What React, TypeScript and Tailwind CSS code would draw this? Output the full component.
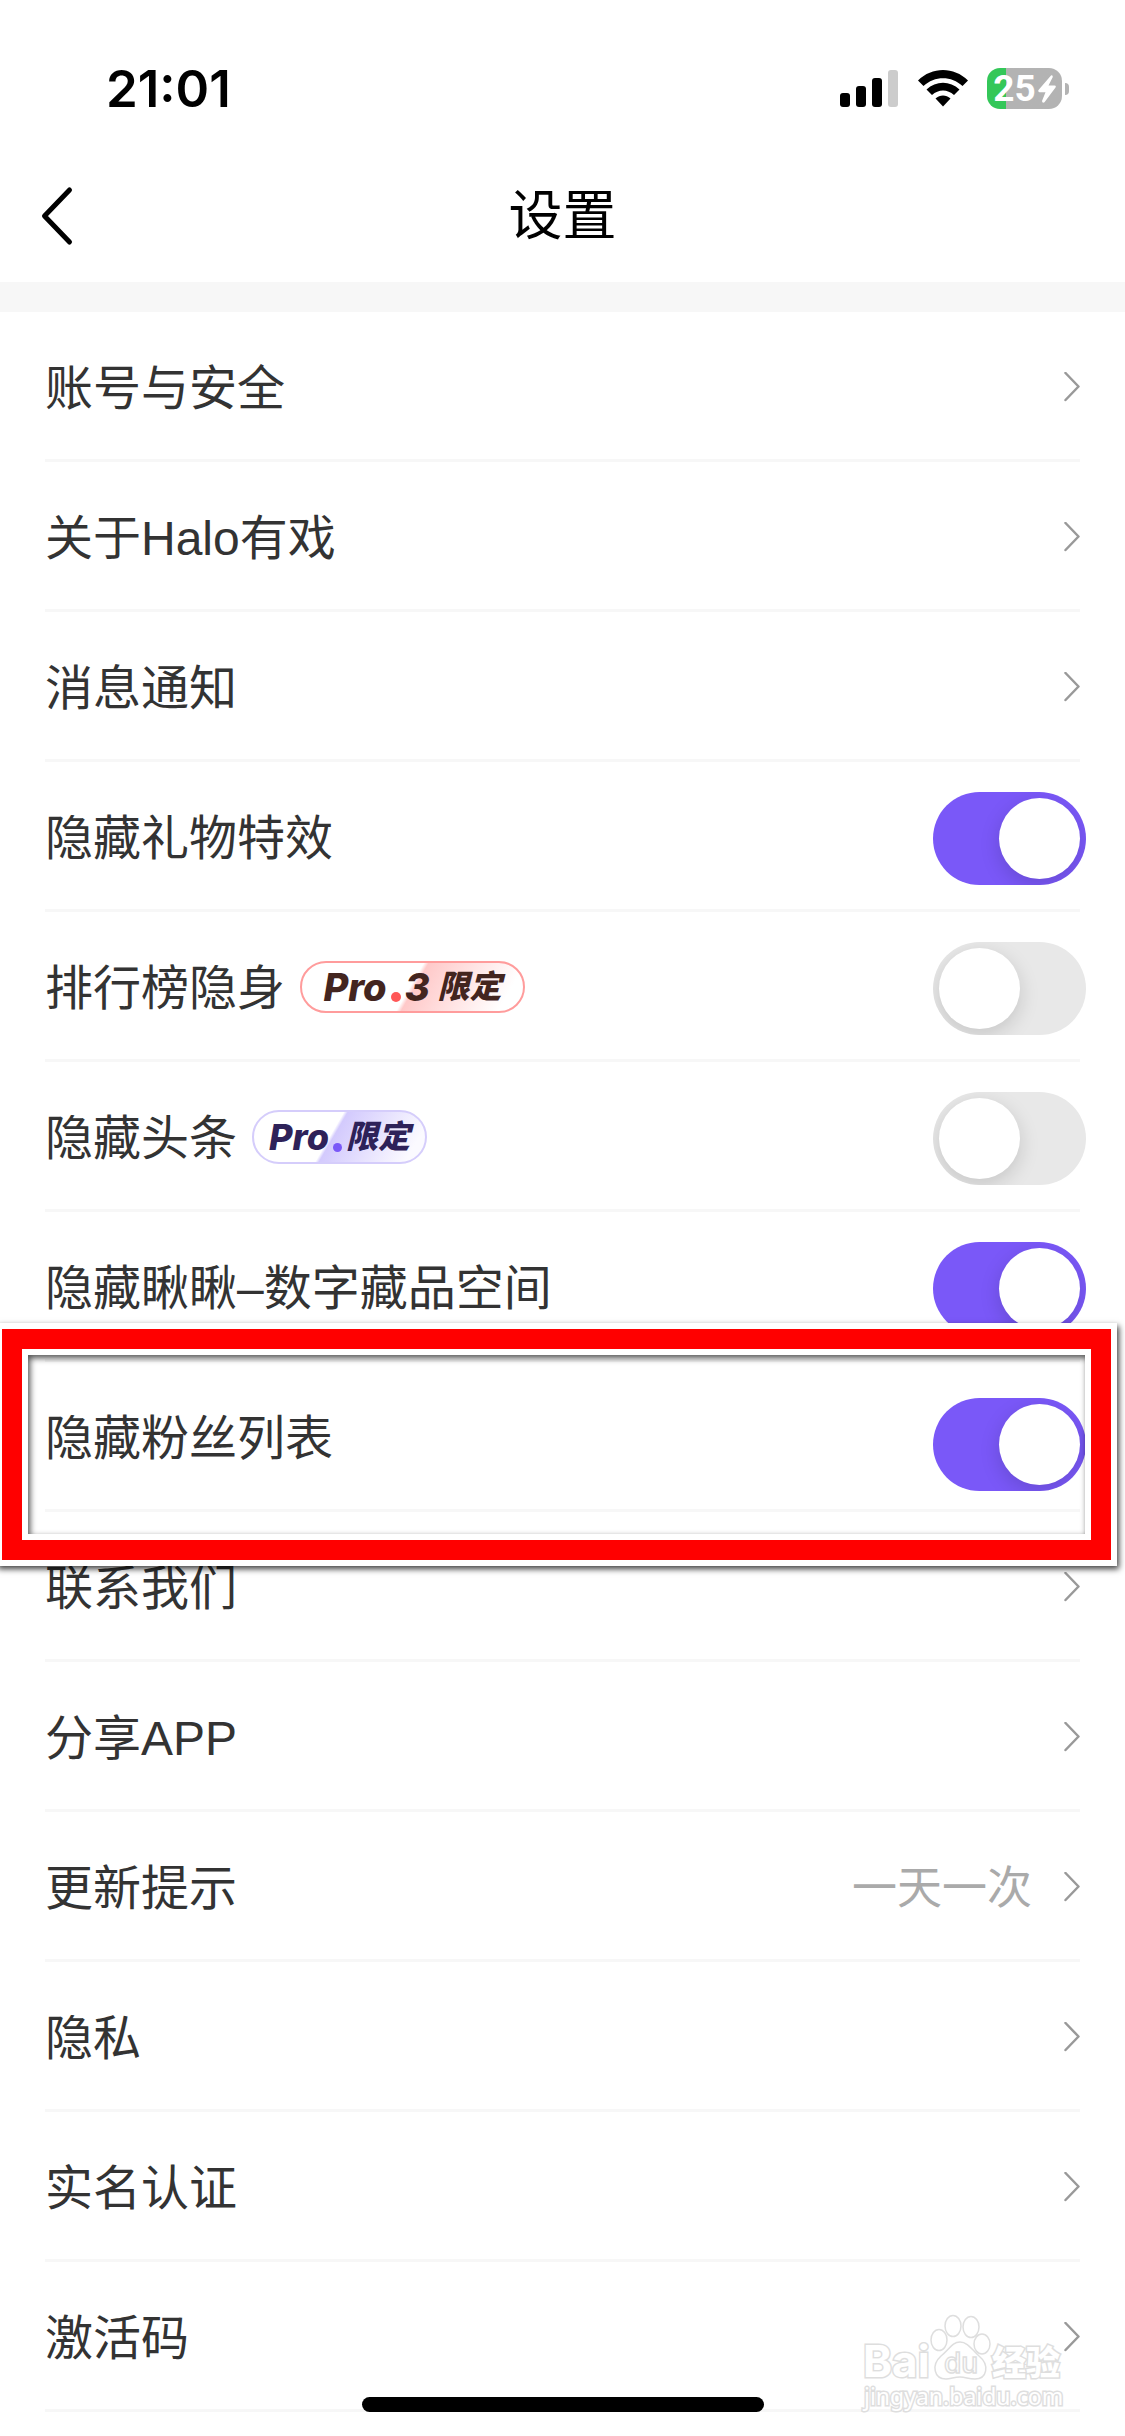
import { useState, type ReactNode } from 'react';

type Row = {
  label: string;
  value?: string;
  toggle?: boolean;
  badge?: 'pro' | 'pro3';
  highlight?: boolean;
};

const rows: Row[] = [
  { label: '账号与安全' },
  { label: '关于Halo有戏' },
  { label: '消息通知' },
  { label: '隐藏礼物特效', toggle: true },
  { label: '排行榜隐身', toggle: false, badge: 'pro3' },
  { label: '隐藏头条', toggle: false, badge: 'pro' },
  { label: '隐藏瞅瞅–数字藏品空间', toggle: true },
  { label: '隐藏粉丝列表', toggle: true, highlight: true },
  { label: '联系我们' },
  { label: '分享APP' },
  { label: '更新提示', value: '一天一次' },
  { label: '隐私' },
  { label: '实名认证' },
  { label: '激活码' },
];

function StatusBar() {
  return (
    <div className="flex h-[141px] items-center justify-between pt-9 pr-14 pl-[106px] text-black">
      <span className="text-[51px] leading-none font-semibold">21:01</span>
      <div className="flex items-center gap-[18px]">
        <svg width="60" height="42" viewBox="0 0 60 42" aria-hidden="true">
          <rect x="1" y="25" width="10" height="14" rx="3" />
          <rect x="17" y="18" width="10" height="21" rx="3" />
          <rect x="33" y="10" width="10" height="29" rx="3" />
          <rect x="49" y="2" width="10" height="37" rx="3" fill="#cccccc" />
        </svg>
        <svg width="52" height="42" viewBox="0 0 52 42" aria-hidden="true">
          <path d="M1 12.5C15-1.5 37-1.5 51 12.5L45.5 18C34.5 7.500 17.500 7.500 6.500 18Z" />
          <path d="M9.500 21.500C19 12.500 33 12.500 42.500 21.500L37 27C30.500 21 21.500 21 15 27Z" />
          <path d="M18.500 30.500C23 26.500 29 26.500 33.500 30.500L26 38.500Z" />
        </svg>
        <div className="flex items-center gap-[3px]">
          <div className="flex h-[41px] w-[75px] items-center justify-center gap-[2px] rounded-[13px] bg-linear-to-r from-[#34c759] from-25% to-[#b3b3b3] to-25% text-white">
            <span className="font-[Roboto] text-[37px] leading-none font-bold">25</span>
            <svg className="shrink-0" width="18" height="28" viewBox="0 0 18 28" fill="currentColor" aria-hidden="true">
              <path d="M13 0.500L0.500 15Q-0.300 17 1.500 17.200H7.500L4 26Q4.300 28.500 6.500 27.200L17.500 12.500Q18.500 10.800 16.500 10.500H10.500L14.800 2Q14.800 -0.500 13 0.500Z" />
            </svg>
          </div>
          <div className="h-3 w-1 rounded-r-full bg-[#b3b3b3]" />
        </div>
      </div>
    </div>
  );
}

function Badge({ kind }: { kind: 'pro' | 'pro3' }) {
  if (kind === 'pro3') {
    return (
      <span className="ml-[15px] flex h-[52px] w-[225px] items-center justify-center rounded-full border-2 border-[#ff9c9c] bg-[linear-gradient(120deg,#fff_49%,#ffc9c9_51%,#fff_90%)] font-[Inter,'Noto_Sans_CJK_SC',sans-serif] text-[#43251f] italic">
        <span className="text-[38px] leading-none font-extrabold">Pro</span>
        <i className="mx-1 mt-5 size-[10px] rounded-full bg-[#ff5757]" />
        <span className="text-[38px] leading-none font-extrabold">3</span>
        <span className="ml-2 text-[32px] leading-none font-black">限定</span>
      </span>
    );
  }
  return (
    <span className="ml-[15px] flex h-[54px] w-[175px] items-center justify-center rounded-full border-2 border-[#d5cdfb] bg-[linear-gradient(120deg,#fff_45%,#d3cafd_47%,#fbfaff_90%)] font-[Inter,'Noto_Sans_CJK_SC',sans-serif] text-[#2e2259] italic">
      <span className="text-[36px] leading-none font-extrabold">Pro</span>
      <i className="mx-1 mt-5 size-[9px] rounded-full bg-[#7a58f8]" />
      <span className="text-[32px] leading-none font-black">限定</span>
    </span>
  );
}

function Toggle({ label, initial, low }: { label: string; initial: boolean; low?: boolean }) {
  const [on, setOn] = useState(initial);
  return (
    <label className={`relative -mr-[6px] block h-[93px] w-[153px] shrink-0 overflow-hidden rounded-full ${low ? 'mt-[15px]' : 'mt-[3px]'}`}>
      <input
        type="checkbox"
        role="switch"
        aria-label={label}
        checked={on}
        onChange={() => setOn(!on)}
        className="peer block size-full appearance-none bg-[#e8e8e8] checked:bg-[#7a58f8]"
      />
      <span className="pointer-events-none absolute top-[6px] left-[6px] size-[81px] rounded-full bg-white shadow-[0_6px_20px_rgba(0,0,0,0.15)] peer-checked:left-[66px]" />
    </label>
  );
}

function Chevron() {
  return (
    <svg className="shrink-0" width="16" height="30" viewBox="0 0 16 30" fill="none" stroke="#999999" strokeWidth="2.5" strokeLinecap="round" strokeLinejoin="round" aria-hidden="true">
      <path d="M1.500 1L14.500 14.500L1.500 28" />
    </svg>
  );
}

// white / red / white frame with a soft shadow on both sides
function Highlight() {
  return (
    <div className="pointer-events-none absolute -top-[39px] -right-[37px] -bottom-[54px] -left-[49px] z-10 border-6 border-white shadow-[2px_3px_6px_rgba(0,0,0,0.75)]">
      <div className="h-full border-20 border-[#ff0000]">
        <div className="h-full border-6 border-white">
          <div className="h-full shadow-[inset_2px_3px_6px_rgba(0,0,0,0.7)]" />
        </div>
      </div>
    </div>
  );
}

function ListRow({ row }: { row: Row }) {
  const content: ReactNode = (
    <>
      <span className="pt-[3px] text-[48px] leading-none whitespace-nowrap">{row.label}</span>
      {row.badge && <Badge kind={row.badge} />}
      <span className="flex-1" />
      {row.value && <span className="mr-8 pt-[3px] text-[45px] leading-none text-[#aaaaaa]">{row.value}</span>}
      {row.toggle === undefined ? <Chevron /> : <Toggle label={row.label} initial={row.toggle} low={row.highlight} />}
    </>
  );
  const base = 'flex h-[150px] w-full items-center border-b-3 border-[#f7f7f7] pt-[3px] text-left';

  return (
    <li className="relative">
      {row.toggle === undefined ? <button className={base}>{content}</button> : <div className={base}>{content}</div>}
      {row.highlight && <Highlight />}
    </li>
  );
}

function Watermark() {
  return (
    <svg className="pointer-events-none absolute right-[57px] bottom-[18px] overflow-visible font-[Inter,'Noto_Sans_CJK_SC',sans-serif]" width="210" height="110" viewBox="0 0 210 110" fill="#ffffff" stroke="#dedede" strokeWidth="1.5" role="img" aria-label="Baidu 经验">
      <text x="5" y="69" fontSize="44" fontWeight="700" strokeWidth="3" paintOrder="stroke">Bai</text>
      <ellipse cx="81" cy="32" rx="8" ry="10.500" />
      <ellipse cx="95" cy="18" rx="8" ry="10.500" />
      <ellipse cx="113" cy="19" rx="8" ry="10.500" />
      <ellipse cx="124" cy="36" rx="8" ry="10" />
      <path d="M102 34C110 34 114 42 121 48C132 57 129 71 117 71C110 71 108 69 102 69C96 69 93 71 88 71C76 71 73 57 83 48C91 42 94 34 102 34Z" />
      <text x="86" y="65" fontSize="28" fontWeight="500">du</text>
      <text x="134" y="67" fontSize="34" fontWeight="900" strokeWidth="3" paintOrder="stroke">经验</text>
      <text x="6" y="97" fontSize="23" fontFamily="Noto Sans" strokeWidth="3" paintOrder="stroke">jingyan.baidu.com</text>
    </svg>
  );
}

export default function App() {
  return (
    <main className="relative min-h-screen overflow-hidden bg-white pb-6 font-[Inter,'Noto_Sans_CJK_SC',sans-serif] text-[#333333]" lang="zh-CN">
      <StatusBar />
      <header className="grid h-[141px] grid-cols-[1fr_auto_1fr] items-center px-10 pt-2 text-black">
        <button aria-label="返回" className="justify-self-start">
          <svg width="34" height="60" viewBox="0 0 34 60" fill="none" stroke="currentColor" strokeWidth="5" strokeLinecap="round" strokeLinejoin="round" aria-hidden="true">
            <path d="M29.500 4L4.500 30L29.500 56" />
          </svg>
        </button>
        <h1 className="text-[54px] leading-none">设置</h1>
      </header>
      <div className="h-[30px] bg-[#f7f7f7]" />
      <ul className="px-[45px] font-['Liberation_Sans','Noto_Sans_CJK_SC',sans-serif]">
        {rows.map((row) => (
          <ListRow key={row.label} row={row} />
        ))}
      </ul>
      <Watermark />
      <div className="absolute bottom-6 left-1/2 h-[15px] w-[402px] -translate-x-1/2 rounded-full bg-black" />
    </main>
  );
}
